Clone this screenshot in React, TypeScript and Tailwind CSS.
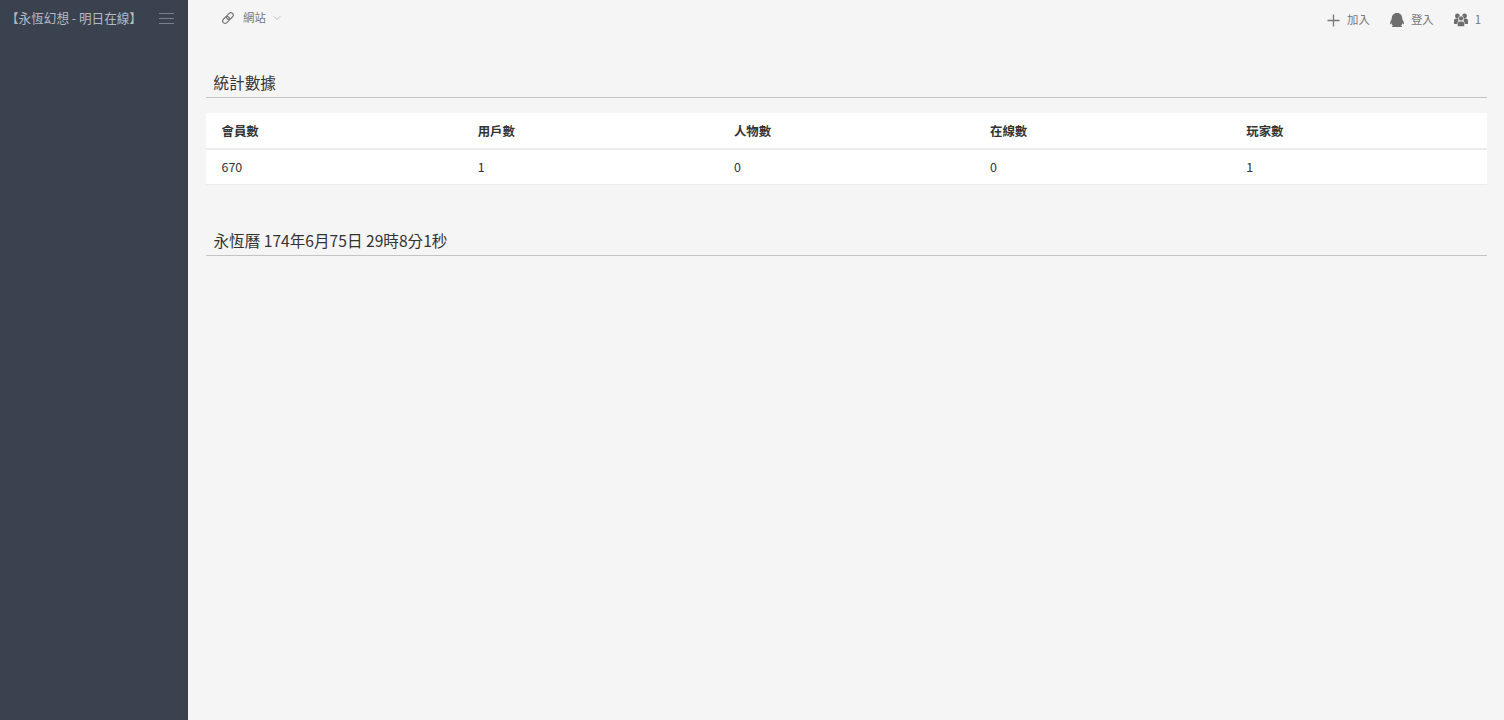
import { ChevronDown } from 'lucide-react';
import { FaQq } from 'react-icons/fa';

const FONT = "font-['Noto_Sans_CJK_TC','Noto_Sans',sans-serif]";

const columns = [
  { label: '會員數', value: '670' },
  { label: '用戶數', value: '1' },
  { label: '人物數', value: '0' },
  { label: '在線數', value: '0' },
  { label: '玩家數', value: '1' },
];

// chain, leaning up to the right
function ChainIcon() {
  return (
    <svg width="14" height="14" viewBox="0 0 14 14" fill="none" stroke="currentColor" strokeWidth="1.2">
      <g transform="rotate(-45 7 7)">
        <rect x="0.5" y="4.6" width="7.6" height="4.8" rx="2.4" />
        <rect x="5.9" y="4.6" width="7.6" height="4.8" rx="2.4" />
      </g>
    </svg>
  );
}

function PlusIcon() {
  return (
    <svg width="13" height="13" viewBox="0 0 13 13" fill="none" stroke="currentColor" strokeWidth="1.3">
      <path d="M0.5 6.5h12M6.5 0.5v12" />
    </svg>
  );
}

// one figure in front of two others
function UsersIcon() {
  return (
    <svg width="14" height="14" viewBox="0 0 14 14" fill="currentColor">
      <circle cx="3.4" cy="3" r="2.4" />
      <circle cx="10.6" cy="3" r="2.4" />
      <path d="M0 11V7.6C0 6.4 1.2 5.6 2.4 5.6h2L4 11H0ZM14 11V7.6c0-1.2-1.2-2-2.4-2h-2l.4 5.4h4Z" />
      <circle cx="7" cy="5.4" r="2.5" stroke="#f5f5f5" strokeWidth="0.6" />
      <path d="M3.4 13.6V10.4c0-1.4 1.2-2.2 2.4-2.2h2.4c1.2 0 2.4.8 2.4 2.2v3.2H3.4Z" stroke="#f5f5f5" strokeWidth="0.6" />
    </svg>
  );
}

function SectionTitle({ children }: { children: React.ReactNode }) {
  return (
    <h3 className="h-[27px] border-b border-[#c4c4c4] pl-[7.5px] text-[15.6px] leading-[23px] text-[#333]">
      {children}
    </h3>
  );
}

export default function App() {
  return (
    <div className={`flex h-[720px] overflow-hidden bg-[#f5f5f5] ${FONT}`}>
      {/* sidebar */}
      <aside className="w-[188px] shrink-0 bg-[#3a4250]">
        <div className="flex h-9 items-center justify-between pr-[14px] pl-1.5">
          <span className="text-[12.6px] whitespace-nowrap text-[#b4bac3]">【永恆幻想 - 明日在線】</span>
          <span className="mt-px flex w-[15px] flex-col gap-1">
            <i className="h-px bg-[#7b818c]" />
            <i className="h-px bg-[#7b818c]" />
            <i className="h-px bg-[#7b818c]" />
          </span>
        </div>
      </aside>

      <div className="min-w-0 flex-1">
        {/* top bar */}
        <header className="flex h-[71px] items-start justify-between pr-[23px] pl-[33px] text-[11.4px] text-[#777]">
          <div className="flex h-9 items-center">
            <ChainIcon />
            <span className="ml-2">網站</span>
            <ChevronDown size={12} strokeWidth={1.2} className="ml-[5px] text-[#999]" />
          </div>
          <div className="mt-0.5 flex h-9 items-center">
            <PlusIcon />
            <span className="ml-[7px]">加入</span>
            <FaQq size={14} className="ml-[20px] scale-x-[1.2] text-[#6e6e6e]" />
            <span className="ml-[7px]">登入</span>
            <span className="ml-[20px] text-[#6e6e6e]"><UsersIcon /></span>
            <span className="ml-[7px]">1</span>
          </div>
        </header>

        <main className="pr-[17px] pl-[18px]">
          <SectionTitle>統計數據</SectionTitle>

          <table className="mt-[15px] w-full table-fixed bg-white text-[12.4px] text-[#333]">
            <thead>
              <tr className="h-9 border-b-2 border-[#ececec]">
                {columns.map((c) => (
                  <th key={c.label} className="pt-0.5 pl-[15.5px] text-left font-bold">{c.label}</th>
                ))}
              </tr>
            </thead>
            <tbody>
              <tr className="h-[35px] border-b border-[#ececec]">
                {columns.map((c) => (
                  <td key={c.label} className="pt-0.5 pl-[15.5px]">{c.value}</td>
                ))}
              </tr>
            </tbody>
          </table>

          <div className="mt-[44px]">
            <SectionTitle>永恆曆 174年6月75日 29時8分1秒</SectionTitle>
          </div>
        </main>
      </div>
    </div>
  );
}
